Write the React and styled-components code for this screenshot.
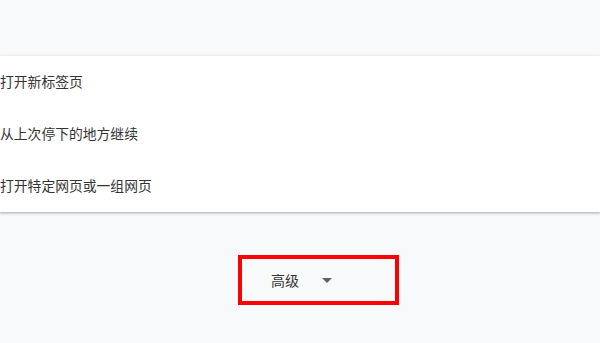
import React from 'react';
import styled, { createGlobalStyle } from 'styled-components';

const GlobalStyle = createGlobalStyle`
html, body {
  margin: 0;
  padding: 0;
  background: #f8f9fa;
  font-family: "Noto Sans CJK SC", "Noto Sans", sans-serif;
}
`;

const Page = styled.main`
width: 600px;
height: 343px;
overflow: hidden;
padding-top: 56px;
box-sizing: border-box;
`;

const Card = styled.section`
background: #fff;
box-shadow: 0 1px 2px rgba(60, 64, 67, 0.3), 0 1px 3px 1px rgba(60, 64, 67, 0.12);
display: flex;
flex-direction: column;
`;

const Option = styled.div`
height: 52px;
box-sizing: border-box;
padding-bottom: 2px;
display: flex;
align-items: center;
font-size: 13.8px;
color: #333;
`;

const Footer = styled.div`
display: flex;
padding: 43px 0 0 238px;
`;

const AdvancedButton = styled.button`
width: 161px;
height: 50px;
box-sizing: border-box;
border: 4.5px solid #ff0000;
background: transparent;
display: flex;
align-items: center;
padding: 0 0 0 29px;
font-family: inherit;
font-size: 14px;
color: #333;
gap: 23px;
cursor: pointer;
`;

const Caret = styled.svg`
width: 10px;
height: 5px;
fill: #5f6368;
`;

export default function App() {
  return (
    <>
      <GlobalStyle />
      <Page>
        <Card>
          <Option>打开新标签页</Option>
          <Option>从上次停下的地方继续</Option>
          <Option>打开特定网页或一组网页</Option>
        </Card>
        <Footer>
          <AdvancedButton>
            高级
            <Caret viewBox="0 0 10 5">
              <path d="M0 0 L10 0 L5 5 Z" />
            </Caret>
          </AdvancedButton>
        </Footer>
      </Page>
    </>
  );
}
